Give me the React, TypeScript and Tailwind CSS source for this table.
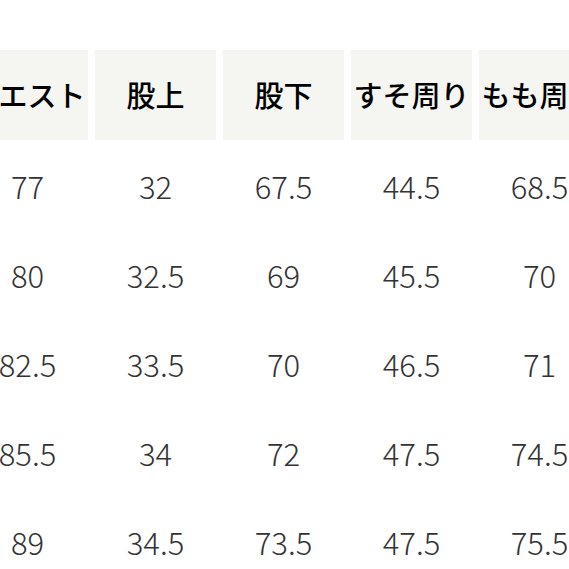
const HEADERS = ['ウエスト', '股上', '股下', 'すそ周り', 'もも周り'];

const ROWS = [
    ['77', '32', '67.5', '44.5', '68.5'],
    ['80', '32.5', '69', '45.5', '70'],
    ['82.5', '33.5', '70', '46.5', '71'],
    ['85.5', '34', '72', '47.5', '74.5'],
    ['89', '34.5', '73.5', '47.5', '75.5'],
];

export default function App() {
    return (
        <div className="w-[569px] h-[569px] overflow-hidden bg-white pt-[50px] font-['Noto_Sans_CJK_JP',sans-serif]">
            <div className="-ml-[33px] grid grid-cols-[repeat(5,121px)] auto-rows-[82px] gap-[7px]">
                {HEADERS.map((h) => (
                    <div
                        key={h}
                        className="h-[90px] flex items-center justify-center bg-[#f5f5f2] text-[29px] font-medium text-black whitespace-nowrap"
                    >
                        {h}
                    </div>
                ))}
                {ROWS.map((row, i) =>
                    row.map((v, j) => (
                        <div
                            key={`${i}-${j}`}
                            className="flex items-center justify-center pt-[12px] text-[31px] font-light text-[#333]"
                        >
                            {v}
                        </div>
                    ))
                )}
            </div>
        </div>
    );
}
